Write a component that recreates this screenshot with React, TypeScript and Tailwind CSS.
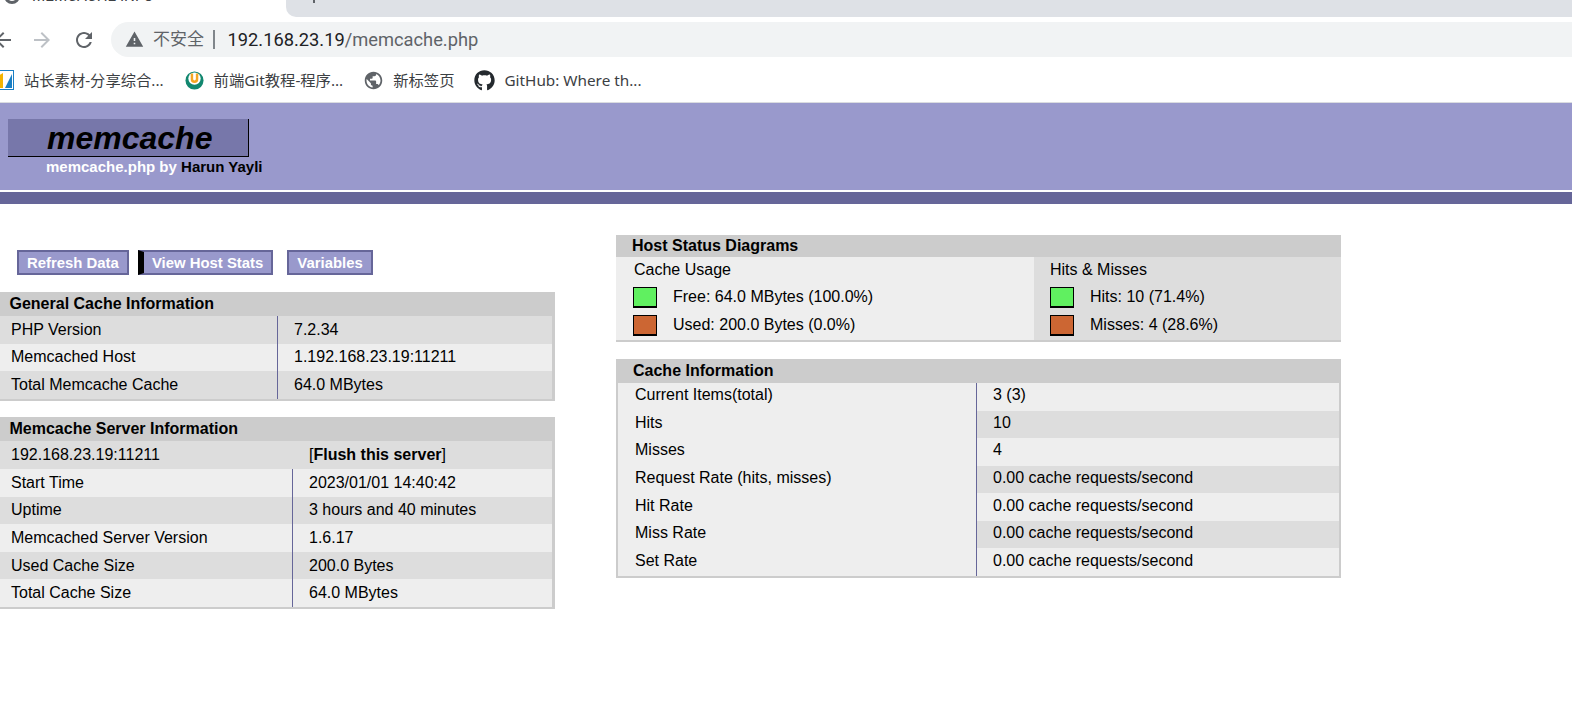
import { FaGithub } from 'react-icons/fa'

const generalRows = [
  ['PHP Version', '7.2.34'],
  ['Memcached Host', '1.192.168.23.19:11211'],
  ['Total Memcache Cache', '64.0 MBytes']
]

const serverRows = [
  ['Start Time', '2023/01/01 14:40:42'],
  ['Uptime', '3 hours and 40 minutes'],
  ['Memcached Server Version', '1.6.17'],
  ['Used Cache Size', '200.0 Bytes'],
  ['Total Cache Size', '64.0 MBytes']
]

const cacheRows = [
  ['Current Items(total)', '3 (3)'],
  ['Hits', '10'],
  ['Misses', '4'],
  ['Request Rate (hits, misses)', '0.00 cache requests/second'],
  ['Hit Rate', '0.00 cache requests/second'],
  ['Miss Rate', '0.00 cache requests/second'],
  ['Set Rate', '0.00 cache requests/second']
]

function Swatch({ used }: { used?: boolean }) {
  return (
    <span
      className={`block w-[24px] h-[21px] border border-black border-b-2 ${used ? 'bg-[#cc6633]' : 'bg-[#60f060]'}`}
    />
  )
}

function LegendRow({ used, label }: { used?: boolean; label: string }) {
  return (
    <div className="flex items-center h-[28px]">
      <Swatch used={used} />
      <span className="ml-[16px]">{label}</span>
    </div>
  )
}

function NavButton({ label, active, className }: { label: string; active?: boolean; className?: string }) {
  return (
    <span
      className={`flex items-center h-[25px] px-[8px] pt-[1px] bg-[#9999cc] border-2 border-[#666699] text-white font-bold text-[14.9px] ${active ? 'border-l-[6px] border-l-black' : ''} ${className ?? ''}`}
    >
      {label}
    </span>
  )
}

function BrowserChrome() {
  return (
    <div className="h-[103px] bg-white border-b border-[#dadce0] font-['Roboto','Noto_Sans_CJK_SC',sans-serif] overflow-hidden">
      {/* Tab strip, cut off at the top of the picture */}
      <div className="flex h-[17px] overflow-hidden">
        <div className="w-[286px] flex items-start pl-[4px]">
          <span className="block w-[16px] h-[16px] -mt-[12px] rounded-full border-[3px] border-[#5f6368]" />
          <span className="ml-[12px] -mt-[14px] h-[20px] leading-[20px] text-[15.2px] text-[#3c4043]">MEMCACHE INFO</span>
        </div>
        <div className="flex-1 bg-[#dee1e6] rounded-bl-[10px] pl-[27px]">
          <span className="block w-[2px] h-[3px] bg-[#5f6368]" />
        </div>
      </div>

      {/* Toolbar */}
      <div className="flex items-center h-[35px] mt-[5px]">
        <svg viewBox="0 0 24 24" className="w-[24px] h-[24px] -ml-[9px] fill-[#5f6368]">
          <path d="M20 11H7.83l5.59-5.59L12 4l-8 8 8 8 1.41-1.41L7.83 13H20v-2z" />
        </svg>
        <svg viewBox="0 0 24 24" className="w-[24px] h-[24px] ml-[15px] fill-[#bdc1c6]">
          <path d="M12 4l-1.41 1.41L16.17 11H4v2h12.17l-5.58 5.59L12 20l8-8z" />
        </svg>
        <svg viewBox="0 0 24 24" className="w-[24px] h-[24px] ml-[18px] fill-[#5f6368]">
          <path d="M17.65 6.35C16.2 4.9 14.21 4 12 4c-4.42 0-7.99 3.58-7.99 8s3.57 8 7.99 8c3.73 0 6.84-2.55 7.73-6h-2.08c-.82 2.33-3.04 4-5.65 4-3.31 0-6-2.69-6-6s2.69-6 6-6c1.66 0 3.14.69 4.22 1.78L13 11h7V4l-2.35 2.35z" />
        </svg>
        <div className="flex-1 flex items-center h-[35px] ml-[15px] bg-[#f1f3f4] rounded-l-full">
          <svg viewBox="0 0 24 24" className="w-[19px] h-[19px] ml-[14px] fill-[#5f6368]">
            <path d="M1 21h22L12 2 1 21zm12-3h-2v-2h2v2zm0-4h-2v-4h2v4z" />
          </svg>
          <span className="ml-[9px] text-[17px] text-[#5f6368]">不安全</span>
          <span className="ml-[9px] w-[1.5px] h-[19px] bg-[#80868b]" />
          <span className="ml-[13px] text-[18.3px] text-[#202124]">192.168.23.19</span>
          <span className="text-[18.3px] text-[#5f6368]">/memcache.php</span>
        </div>
      </div>

      {/* Bookmarks */}
      <div className="flex items-center h-[44px] mt-[1px] text-[15.3px] text-[#3c4043] font-['Noto_Sans','Noto_Sans_CJK_SC',sans-serif]">
        <svg viewBox="0 0 18 20" className="w-[18px] h-[20px] -ml-[4px]">
          <rect x="0" y="0" width="18" height="20" fill="#1a7fc4" />
          <rect x="1" y="1" width="16" height="18" fill="#ffffff" />
          <path d="M2 18V6l5-3v15z" fill="#f4b400" />
          <path d="M9 18L16 4v14z" fill="#1a7fc4" />
        </svg>
        <span className="ml-[10px]">站长素材-分享综合...</span>
        <svg viewBox="0 0 20 20" className="w-[19px] h-[19px] ml-[21px]">
          <circle cx="10" cy="10" r="9.5" fill="#12876f" />
          <circle cx="10" cy="8" r="6.5" fill="#ffffff" />
          <path d="M6 2.5h2.6v6a1.4 1.4 0 0 0 2.8 0v-6H14v6.2a4 4 0 0 1-8 0z" fill="#f5a623" />
        </svg>
        <span className="ml-[10px]">前端Git教程-程序...</span>
        <svg viewBox="0 0 24 24" className="w-[21px] h-[21px] ml-[20px] fill-[#5f6368]">
          <path d="M12 2C6.48 2 2 6.48 2 12s4.48 10 10 10 10-4.48 10-10S17.52 2 12 2zm-1 17.93c-3.95-.49-7-3.85-7-7.93 0-.62.08-1.21.21-1.79L9 15v1c0 1.1.9 2 2 2v1.93zm6.9-2.54c-.26-.81-1-1.39-1.9-1.39h-1v-3c0-.55-.45-1-1-1H8v-2h2c.55 0 1-.45 1-1V7h2c1.1 0 2-.9 2-2v-.41c2.93 1.19 5 4.06 5 7.41 0 2.08-.8 3.97-2.1 5.39z" />
        </svg>
        <span className="ml-[9px]">新标签页</span>
        <FaGithub className="w-[21px] h-[21px] ml-[20px] text-[#24292e]" />
        <span className="ml-[9px]">GitHub: Where th...</span>
      </div>
    </div>
  )
}

export default function App() {
  return (
    <div className="min-h-[721px] bg-white text-black text-[16px] font-['Liberation_Sans',Arial,sans-serif] overflow-hidden">
      <BrowserChrome />

      {/* Page header */}
      <div className="h-[87px] bg-[#9999cc] pt-[16px] pl-[8px]">
        <div className="flex items-center w-[241px] h-[38px] bg-[#7777aa] border-r border-b border-black pl-[39px] text-[32px] font-bold italic">
          memcache
        </div>
        <div className="pl-[38px] mt-[1px] h-[18px] leading-[18px] text-[15px] font-bold text-white">
          memcache.php by <span className="text-black">Harun Yayli</span>
        </div>
      </div>
      <div className="h-[2px] bg-white" />
      <div className="h-[12px] bg-[#666699]" />

      <div className="flex">
        {/* Left column */}
        <div className="w-[555px] shrink-0 pt-[46px]">
          <div className="flex pl-[17px] h-[25px]">
            <NavButton label="Refresh Data" />
            <NavButton label="View Host Stats" active className="ml-[9px]" />
            <NavButton label="Variables" className="ml-[14px]" />
          </div>

          <div className="mt-[17px] bg-[#cccccc] pr-[3px] pb-[2px]">
            <div className="h-[24px] leading-[24px] pl-[9.5px] font-bold">General Cache Information</div>
            {generalRows.map(([label, value], i) => (
              <div key={label} className={`flex items-center h-[27.67px] ${i % 2 ? 'bg-[#eeeeee]' : 'bg-[#dddddd]'}`}>
                <div className="w-[278px] h-full flex items-center pl-[11px] border-r border-[#666699]">{label}</div>
                <div className="pl-[16px]">{value}</div>
              </div>
            ))}
          </div>

          <div className="mt-[16px] bg-[#cccccc] pr-[3px] pb-[2px]">
            <div className="h-[24px] leading-[24px] pl-[9.5px] font-bold">Memcache Server Information</div>
            <div className="flex items-center h-[28px] bg-[#dddddd]">
              <div className="w-[293px] pl-[11px]">192.168.23.19:11211</div>
              <div className="pl-[16px]">
                [<span className="font-bold">Flush this server</span>]
              </div>
            </div>
            {serverRows.map(([label, value], i) => (
              <div key={label} className={`flex items-center h-[27.6px] ${i % 2 ? 'bg-[#dddddd]' : 'bg-[#eeeeee]'}`}>
                <div className="w-[293px] h-full flex items-center pl-[11px] border-r border-[#666699]">{label}</div>
                <div className="pl-[16px]">{value}</div>
              </div>
            ))}
          </div>
        </div>

        {/* Right column */}
        <div className="w-[725px] ml-[61px] shrink-0 pt-[31px]">
          <div className="bg-[#cccccc] pb-[2px]">
            <div className="h-[22px] leading-[22px] pl-[16px] font-bold">Host Status Diagrams</div>
            <div className="flex h-[83px]">
              <div className="w-[418px] bg-[#eeeeee] pl-[17px] pt-[1px]">
                <div className="h-[25px] leading-[24px] pl-[1px]">Cache Usage</div>
                <LegendRow label="Free: 64.0 MBytes (100.0%)" />
                <LegendRow used label="Used: 200.0 Bytes (0.0%)" />
              </div>
              <div className="flex-1 bg-[#dddddd] pl-[16px] pt-[1px]">
                <div className="h-[25px] leading-[24px]">Hits &amp; Misses</div>
                <LegendRow label="Hits: 10 (71.4%)" />
                <LegendRow used label="Misses: 4 (28.6%)" />
              </div>
            </div>
          </div>

          <div className="mt-[17px] bg-[#cccccc] px-[2px] pb-[2px]">
            <div className="h-[24px] leading-[24px] pl-[15px] font-bold">Cache Information</div>
            {cacheRows.map(([label, value], i) => (
              <div key={label} className="flex h-[27.57px] bg-[#eeeeee]">
                <div className="w-[359px] flex items-center pl-[17px] pb-[3px] border-r border-[#666699]">{label}</div>
                <div className={`flex-1 flex items-center pl-[16px] pb-[3px] ${i % 2 ? 'bg-[#dddddd]' : ''}`}>{value}</div>
              </div>
            ))}
          </div>
        </div>
      </div>
    </div>
  )
}
